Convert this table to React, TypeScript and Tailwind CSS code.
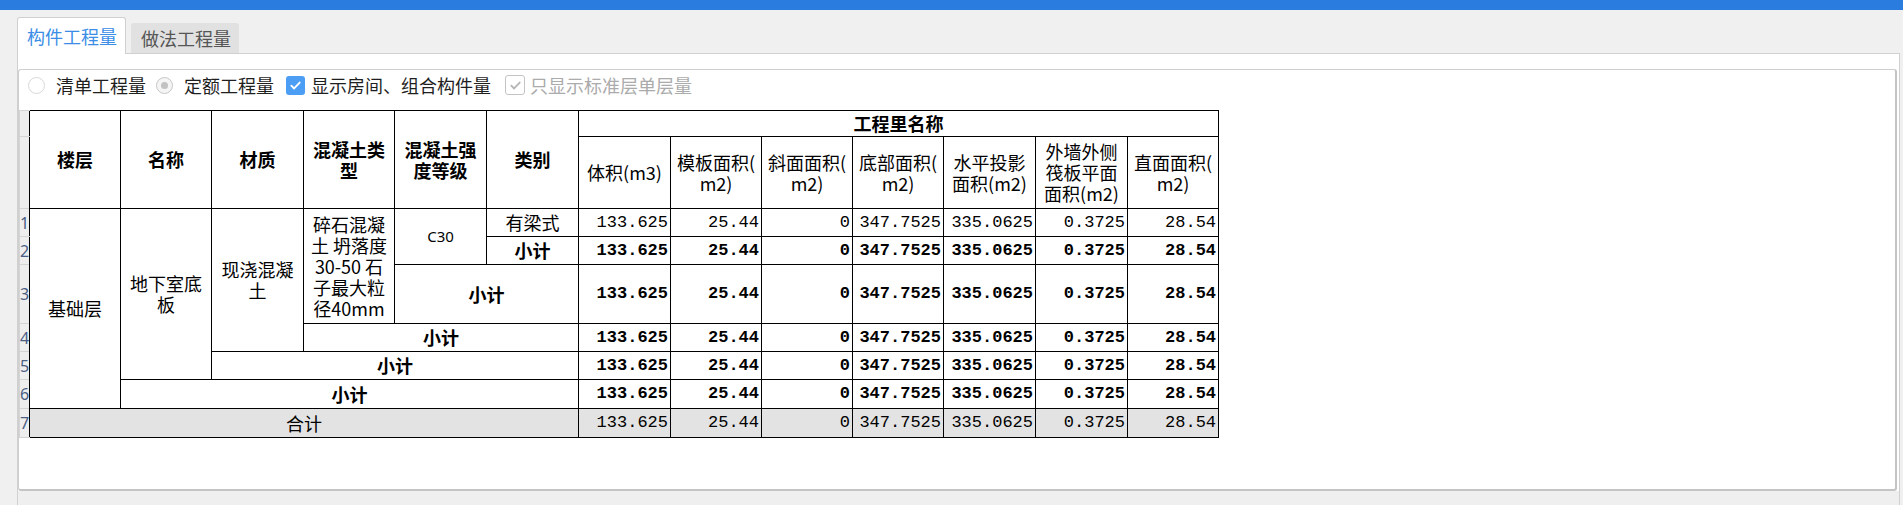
import React from 'react';

const cjk = "font-['Noto_Sans_CJK_SC',sans-serif]";
const mono = "font-['Liberation_Mono',monospace]";

const values = ['133.625', '25.44', '0', '347.7525', '335.0625', '0.3725', '28.54'];

const colWidths = [
  'w-[10px]', 'w-[91px]', 'w-[91px]', 'w-[92px]', 'w-[91px]', 'w-[92px]', 'w-[92px]',
  'w-[92px]', 'w-[91px]', 'w-[91px]', 'w-[91px]', 'w-[92px]', 'w-[92px]', 'w-[91px]',
];

const RowNo: React.FC<{ n?: string }> = ({ n }) => (
  <td className="border border-[#d4d4d4] border-r-0 bg-[#eeeeee] p-0 overflow-hidden align-middle text-left font-['Noto_Sans',sans-serif] text-[16px] leading-[18px] text-[#4b5f85]">
    {n}
  </td>
);

const Nums: React.FC<{ bold?: boolean; gray?: boolean }> = ({ bold, gray }) => (
  <>
    {values.map((v, i) => (
      <td
        key={i}
        className={`border border-black pr-[2px] text-right ${mono} text-[17px] leading-[20px] text-black ${bold ? 'font-bold' : ''} ${gray ? 'bg-[#e3e3e3]' : ''}`}
      >
        {v}
      </td>
    ))}
  </>
);

const cell = 'border border-black px-[2px] text-center align-middle text-black';

export default function App() {
  return (
    <div className={`w-[1903px] h-[505px] bg-[#f0f0f0] overflow-hidden flex flex-col ${cjk}`}>
      <div className="h-[10px] bg-[#2a7ddf]" />

      {/* tabs */}
      <div className="h-[43px] flex items-end pl-[17px] gap-[5px]">
        <div className="relative z-10 mb-[-1px] h-[37px] w-[109px] bg-white border border-b-0 border-[#d0d0d0] rounded-t-[3px] pl-[9px] flex items-center text-[18px] text-[#3b8de6]">
          构件工程量
        </div>
        <div className="h-[30px] w-[108px] bg-[#e1e1e1] rounded-t-[3px] pl-[10px] flex items-center text-[18px] text-[#555555]">
          做法工程量
        </div>
      </div>

      {/* panel */}
      <div className="ml-[17px] w-[1883px] flex-1 bg-white border border-b-0 border-[#d0d0d0] pt-[15px] flex flex-col">
        <div className="mr-[2px] h-[422px] border border-[#cfcfcf] border-r-2 border-b-2 border-r-[#c4c4c4] border-b-[#c4c4c4] rounded-[3px] flex flex-col">
          {/* options */}
          <div className="h-[30px] flex items-center text-[18px] text-[#1f1f1f]">
            <span className="ml-[9px] w-[17px] h-[17px] rounded-full border border-[#d8d8d8] bg-white" />
            <span className="ml-[11px]">清单工程量</span>
            <span className="ml-[10px] w-[17px] h-[17px] rounded-full border border-[#c6c6c6] bg-[#f5f5f5] flex items-center justify-center">
              <span className="w-[7px] h-[7px] rounded-full bg-[#c2c2c2]" />
            </span>
            <span className="ml-[11px]">定额工程量</span>
            <span className="ml-[12px] w-[19px] h-[19px] rounded-[3px] bg-[#4b9ef3] flex items-center justify-center">
              <svg width="13" height="13" viewBox="0 0 14 14" fill="none">
                <path d="M2.5 7.2l3 3 6-6.4" stroke="white" strokeWidth="2" strokeLinecap="round" strokeLinejoin="round" />
              </svg>
            </span>
            <span className="ml-[6px]">显示房间、组合构件量</span>
            <span className="ml-[14px] w-[20px] h-[20px] rounded-[3px] border border-[#c4c4c4] bg-white flex items-center justify-center">
              <svg width="13" height="13" viewBox="0 0 14 14" fill="none">
                <path d="M2.5 7.2l3 3 6-6.4" stroke="#b6b6b6" strokeWidth="2" strokeLinecap="round" strokeLinejoin="round" />
              </svg>
            </span>
            <span className="ml-[5px] text-[#ababab]">只显示标准层单层量</span>
          </div>

          {/* table */}
          <div className="pt-[10px]">
            <table className="table-fixed border-collapse w-[1199px] text-[18px] leading-[21px]">
              <colgroup>
                {colWidths.map((w, i) => (
                  <col key={i} className={w} />
                ))}
              </colgroup>
              <thead>
                <tr className="h-[26px]">
                  <RowNo />
                  <th rowSpan={2} className={`${cell} font-bold`}>楼层</th>
                  <th rowSpan={2} className={`${cell} font-bold`}>名称</th>
                  <th rowSpan={2} className={`${cell} font-bold`}>材质</th>
                  <th rowSpan={2} className={`${cell} font-bold`}>混凝土类<br />型</th>
                  <th rowSpan={2} className={`${cell} font-bold`}>混凝土强<br />度等级</th>
                  <th rowSpan={2} className={`${cell} font-bold`}>类别</th>
                  <th colSpan={7} className={`${cell} font-bold`}>工程里名称</th>
                </tr>
                <tr className="h-[72px]">
                  <RowNo />
                  <th className={`${cell} font-normal`}>体积(m3)</th>
                  <th className={`${cell} font-normal`}>模板面积(<br />m2)</th>
                  <th className={`${cell} font-normal`}>斜面面积(<br />m2)</th>
                  <th className={`${cell} font-normal`}>底部面积(<br />m2)</th>
                  <th className={`${cell} font-normal`}>水平投影<br />面积(m2)</th>
                  <th className={`${cell} font-normal`}>外墙外侧<br />筏板平面<br />面积(m2)</th>
                  <th className={`${cell} font-normal`}>直面面积(<br />m2)</th>
                </tr>
              </thead>
              <tbody>
                <tr className="h-[28px]">
                  <RowNo n="1" />
                  <td rowSpan={6} className={cell}>基础层</td>
                  <td rowSpan={5} className={cell}>地下室底<br />板</td>
                  <td rowSpan={4} className={cell}>现浇混凝<br />土</td>
                  <td rowSpan={3} className={cell}>碎石混凝<br />土 坍落度<br />30-50 石<br />子最大粒<br />径40mm</td>
                  <td rowSpan={2} className={`${cell} font-['Noto_Sans',sans-serif] text-[15px]`}>C30</td>
                  <td className={cell}>有梁式</td>
                  <Nums />
                </tr>
                <tr className="h-[28px]">
                  <RowNo n="2" />
                  <td className={`${cell} font-bold`}>小计</td>
                  <Nums bold />
                </tr>
                <tr className="h-[59px]">
                  <RowNo n="3" />
                  <td colSpan={2} className={`${cell} font-bold`}>小计</td>
                  <Nums bold />
                </tr>
                <tr className="h-[28px]">
                  <RowNo n="4" />
                  <td colSpan={3} className={`${cell} font-bold`}>小计</td>
                  <Nums bold />
                </tr>
                <tr className="h-[28px]">
                  <RowNo n="5" />
                  <td colSpan={4} className={`${cell} font-bold`}>小计</td>
                  <Nums bold />
                </tr>
                <tr className="h-[29px]">
                  <RowNo n="6" />
                  <td colSpan={5} className={`${cell} font-bold`}>小计</td>
                  <Nums bold />
                </tr>
                <tr className="h-[29px]">
                  <RowNo n="7" />
                  <td colSpan={6} className={`${cell} bg-[#e3e3e3]`}>合计</td>
                  <Nums gray />
                </tr>
              </tbody>
            </table>
          </div>
        </div>
        <div className="flex-1 bg-[#efefef]" />
      </div>
    </div>
  );
}
